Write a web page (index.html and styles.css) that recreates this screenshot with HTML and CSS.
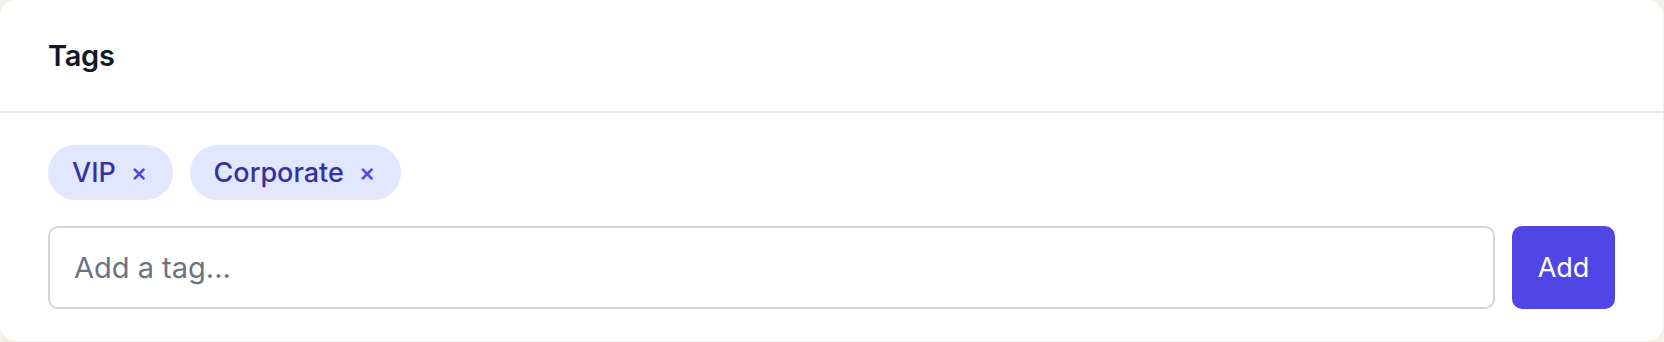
FILE: index.html
```html
<!DOCTYPE html>
<html lang="en">
<head>
<meta charset="utf-8">
<title>Tags</title>
<link rel="stylesheet" href="styles.css">
</head>
<body>
  <section class="card">
    <header class="card-header">
      <h2 class="card-title">Tags</h2>
    </header>
    <div class="card-body">
      <ul class="tag-list">
        <li class="tag"><span class="tag-label">VIP</span><button class="tag-remove" type="button" aria-label="Remove VIP">×</button></li>
        <li class="tag"><span class="tag-label">Corporate</span><button class="tag-remove" type="button" aria-label="Remove Corporate">×</button></li>
      </ul>
      <form class="tag-form" onsubmit="return false">
        <input class="tag-input" type="text" placeholder="Add a tag...">
        <button class="tag-add" type="submit">Add</button>
      </form>
    </div>
  </section>
</body>
</html>
```
FILE: styles.css
```css
* { box-sizing: border-box; }
html, body { margin: 0; padding: 0; }
body {
  background: #f4f0ea;
  font-family: Inter, "Noto Sans", sans-serif;
  width: 1664px;
  height: 342px;
}
.card {
  width: 1663px;
  height: 341px;
  background: #ffffff;
  border-radius: 16px;
  overflow: hidden;
}
.card-header {
  height: 113px;
  padding: 0 48px;
  display: flex;
  align-items: center;
  border-bottom: 2px solid #e5e7eb;
}
.card-title {
  margin: 0;
  font-size: 29px;
  font-weight: 600;
  color: #111827;
  letter-spacing: -0.3px;
}
.card-body {
  padding: 32px 48px;
  display: flex;
  flex-direction: column;
  gap: 26px;
}
.tag-list {
  list-style: none;
  margin: 0;
  padding: 0;
  display: flex;
  gap: 17px;
}
.tag {
  height: 55px;
  display: flex;
  align-items: center;
  gap: 15px;
  padding: 0 25px 0 24px;
  background: #e0e7ff;
  border-radius: 999px;
  color: #3730a3;
  font-size: 27px;
  font-weight: 500;
}
.tag-label { line-height: 1; }
.tag-remove {
  border: 0;
  background: none;
  padding: 0;
  color: #4f46e5;
  font-family: inherit;
  font-size: 25px;
  font-weight: 500;
  line-height: 1;
  cursor: pointer;
}
.tag-form {
  display: flex;
  gap: 17px;
}
.tag-input {
  flex: 1;
  height: 83px;
  border: 2px solid #d1d5db;
  border-radius: 10px;
  padding: 0 24px;
  font-family: inherit;
  font-size: 29px;
  color: #111827;
  outline: none;
}
.tag-input::placeholder { color: #6b7280; }
.tag-add {
  width: 103px;
  height: 83px;
  border: 0;
  border-radius: 10px;
  background: #4f46e5;
  color: #ffffff;
  font-family: inherit;
  font-size: 27px;
  cursor: pointer;
}
```
